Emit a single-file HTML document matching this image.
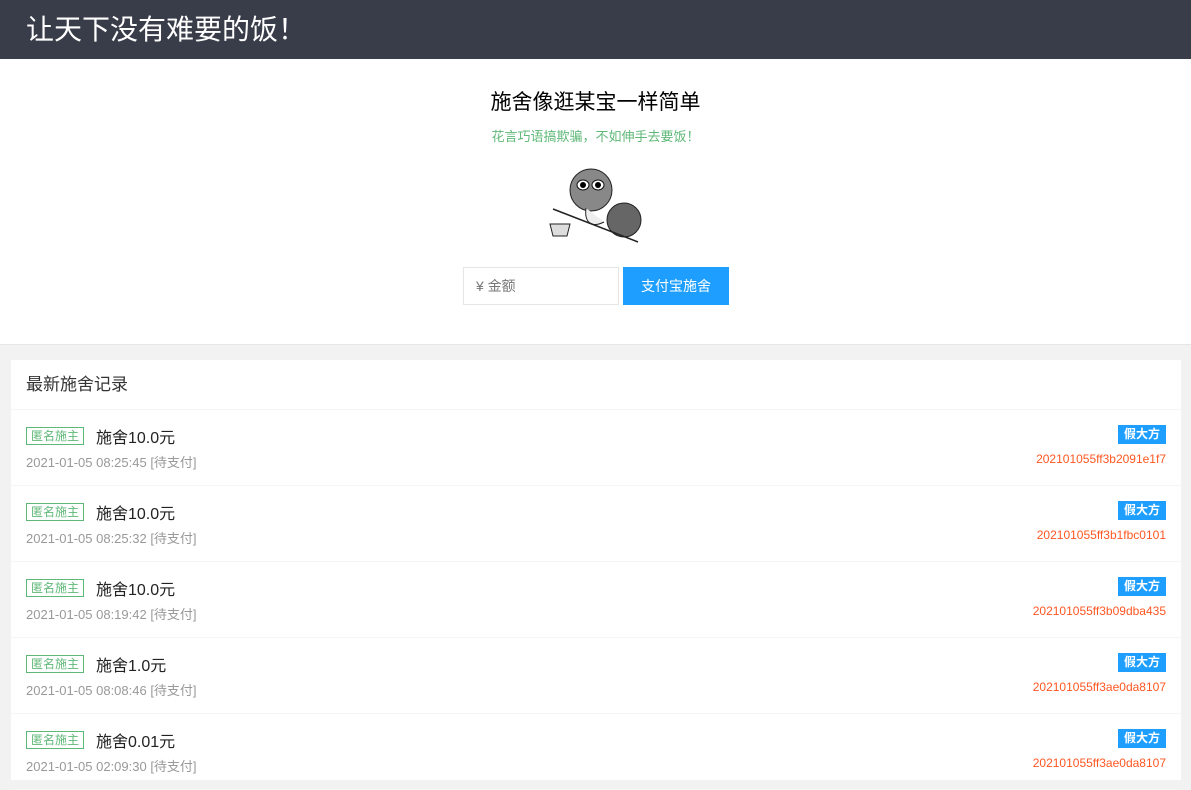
<!DOCTYPE html>
<html><head><meta charset="utf-8"><style>
*{margin:0;padding:0;box-sizing:border-box}
body{width:1191px;height:776px;overflow:hidden;background:#f2f2f2;font-family:"Liberation Sans","Noto Sans CJK SC",sans-serif}
.hd{height:59px;background:#393d49;color:#fff;font-size:28px;line-height:59px;padding-left:26px}
.top{background:#fff;height:286px;text-align:center;border-bottom:1px solid #e6e6e6}
.t1{padding-top:91px;font-size:21px;color:#000;line-height:24px;position:absolute;width:100%;top:0}
.t2{position:absolute;top:126px;width:100%;font-size:13px;color:#5fb878}
.form{position:absolute;top:267px;left:463px;display:flex}
.in{width:156px;height:38px;border:1px solid #e6e6e6;font-size:14px;color:#777;line-height:36px;padding-left:12px;text-align:left}
.btn{margin-left:4px;width:106px;height:38px;background:#1e9fff;color:#fff;font-size:14px;line-height:38px;text-align:center}
.card{position:absolute;top:360px;left:11px;width:1170px;height:420px;background:#fff}
.ct{height:50px;line-height:50px;padding-left:15px;font-size:17px;color:#333;border-bottom:1px solid #f6f6f6}
.row{height:76px;border-bottom:1px solid #f6f6f6;position:relative}
.tag{position:absolute;left:15px;top:17px;border:1px solid #5fb878;color:#5fb878;font-size:12px;height:18px;line-height:16px;padding:0 4px}
.amt{position:absolute;left:85px;top:14px;font-size:16px;color:#222}
.dt{position:absolute;left:15px;top:42px;font-size:13px;color:#999}
.bd{position:absolute;right:15px;top:15px;background:#1e9fff;color:#fff;font-size:12px;height:19px;line-height:19px;padding:0 6px;font-weight:bold}
.id{position:absolute;right:15px;top:42px;font-size:12px;color:#ff5722}
</style></head><body>
<div class="hd">让天下没有难要的饭！</div>
<div class="top">
<div class="t1">施舍像逛某宝一样简单</div>
<div class="t2">花言巧语搞欺骗，不如伸手去要饭！</div>
<svg style="position:absolute;left:546px;top:168px" width="96" height="76" viewBox="0 0 96 76">
<circle cx="45" cy="22" r="21" fill="#888" stroke="#222"/>
<ellipse cx="37" cy="17" rx="6" ry="5" fill="#fff" stroke="#111"/><circle cx="37" cy="17" r="3"/>
<ellipse cx="52" cy="17" rx="6" ry="5" fill="#fff" stroke="#111"/><circle cx="52" cy="17" r="3"/>
<circle cx="78" cy="52" r="17" fill="#666" stroke="#222"/>
<path d="M40 40 C38 55 46 60 58 54" fill="#eee" stroke="#222"/>
<line x1="7" y1="41" x2="92" y2="74" stroke="#222" stroke-width="1.5"/>
<path d="M4 56 h20 l-3 12 h-14z" fill="#ddd" stroke="#222"/>
</svg>
<div class="form"><div class="in">¥ 金额</div><div class="btn">支付宝施舍</div></div>
</div>
<div class="card">
<div class="ct">最新施舍记录</div>
<div class="row"><span class="tag">匿名施主</span><span class="amt">施舍10.0元</span><span class="dt">2021-01-05 08:25:45 [待支付]</span><span class="bd">假大方</span><span class="id">202101055ff3b2091e1f7</span></div>
<div class="row"><span class="tag">匿名施主</span><span class="amt">施舍10.0元</span><span class="dt">2021-01-05 08:25:32 [待支付]</span><span class="bd">假大方</span><span class="id">202101055ff3b1fbc0101</span></div>
<div class="row"><span class="tag">匿名施主</span><span class="amt">施舍10.0元</span><span class="dt">2021-01-05 08:19:42 [待支付]</span><span class="bd">假大方</span><span class="id">202101055ff3b09dba435</span></div>
<div class="row"><span class="tag">匿名施主</span><span class="amt">施舍1.0元</span><span class="dt">2021-01-05 08:08:46 [待支付]</span><span class="bd">假大方</span><span class="id">202101055ff3ae0da8107</span></div>
<div class="row"><span class="tag">匿名施主</span><span class="amt">施舍0.01元</span><span class="dt">2021-01-05 02:09:30 [待支付]</span><span class="bd">假大方</span><span class="id">202101055ff3ae0da8107</span></div>
</div>
</body></html>
